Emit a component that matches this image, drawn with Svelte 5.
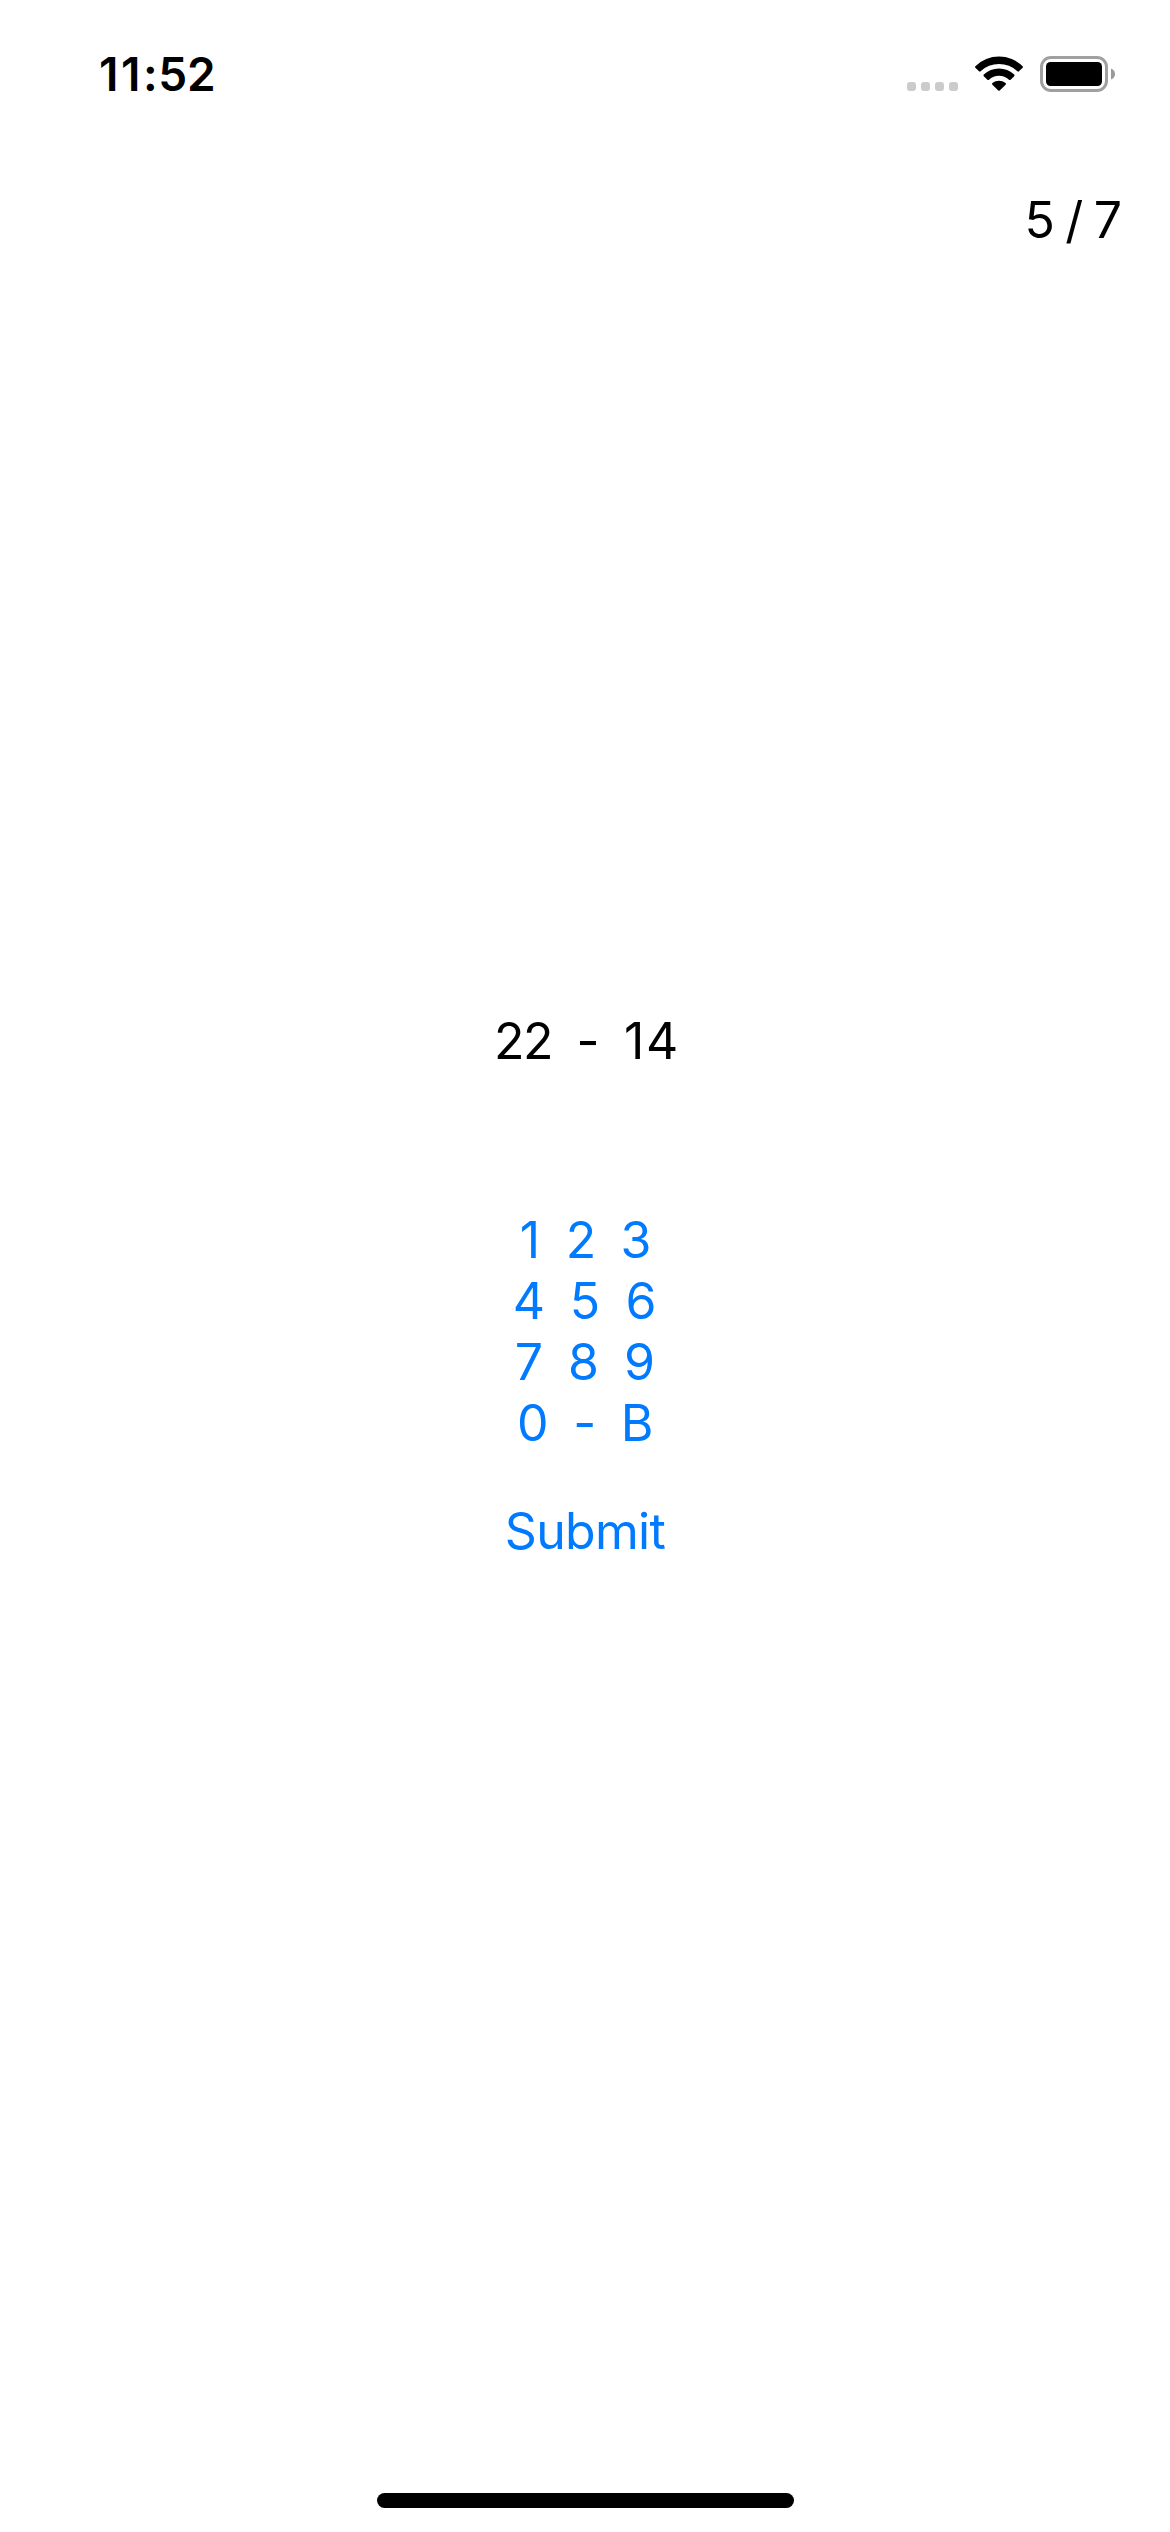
<script>
  const current = 5;
  const total = 7;
  const problem = { left: 22, op: '-', right: 14 };

  const rows = [
    [{ t: '1', w: 24 }, { t: '2', w: 30 }, { t: '3', w: 32 }],
    [{ t: '4', w: 32 }, { t: '5', w: 32 }, { t: '6', w: 32 }],
    [{ t: '7', w: 29 }, { t: '8', w: 32 }, { t: '9', w: 32 }],
    [{ t: '0', w: 32.5 }, { t: '-', w: 23.5 }, { t: 'B', w: 33 }]
  ];
</script>

<main class="screen">
  <header class="status">
    <time class="clock"><span class="hours">11</span><span class="colon">:</span><span>52</span></time>
    <svg class="indicators" width="210" height="42" viewBox="0 0 210 42" aria-hidden="true">
      <!-- cellular dots -->
      <g fill="#cbcbcb">
        <rect x="2" y="30" width="9" height="9" rx="3" />
        <rect x="16" y="30" width="9" height="9" rx="3" />
        <rect x="30" y="30" width="9" height="9" rx="3" />
        <rect x="44" y="30" width="9" height="9" rx="3" />
      </g>
      <!-- wifi -->
      <g transform="translate(94 39)">
        <path d="M-23.6 -24.8 A33.8 33.8 0 0 1 23.6 -24.8 Q24.4 -24 23.6 -23.2 L20 -19.7 Q19.2 -19 18.4 -19.7 A26.6 26.6 0 0 0 -18.4 -19.7 Q-19.2 -19 -20 -19.7 L-23.6 -23.2 Q-24.4 -24 -23.6 -24.8 Z" />
        <path d="M-15.2 -16.4 A21.9 21.9 0 0 1 15.2 -16.4 Q16 -15.6 15.2 -14.8 L11.6 -11.3 Q10.8 -10.6 10 -11.3 A14.7 14.7 0 0 0 -10 -11.3 Q-10.8 -10.6 -11.6 -11.3 L-15.2 -14.8 Q-16 -15.6 -15.2 -16.4 Z" />
        <path d="M-6.6 -7.9 A10.1 10.1 0 0 1 6.6 -7.9 Q7.4 -7.1 6.6 -6.3 L0.7 -0.5 Q0 0.1 -0.7 -0.5 L-6.6 -6.3 Q-7.4 -7.1 -6.6 -7.9 Z" />
      </g>
      <!-- battery -->
      <rect x="136.5" y="5.5" width="65" height="33" rx="9.5" fill="none" stroke="#a0a0a0" stroke-width="3" />
      <rect x="141" y="10" width="56" height="24" rx="4.5" />
      <path d="M206 16.5 Q210 18 210 22 Q210 26 206 27.5 Z" fill="#9a9a9a" />
    </svg>
  </header>

  <p class="progress">{current} / {total}</p>

  <section class="quiz">
    <div class="problem">
      <span class="left">{problem.left}</span>
      <span>{problem.op}</span>
      <span class="right">{problem.right}</span>
    </div>
    <div class="pad">
      {#each rows as row}
        <div class="row">
          {#each row as key}
            <button style="width: {key.w}px">{key.t}</button>
          {/each}
        </div>
      {/each}
    </div>
    <button class="submit">Submit</button>
  </section>

  <div class="home"></div>
</main>

<style>
  :global(body) {
    background: #fff;
  }
  .screen {
    display: flex;
    flex-direction: column;
    width: 1170px;
    height: 2532px;
    box-sizing: border-box;
    padding-bottom: 24px;
    color: #000;
    font: 400 50px/61px Inter, "Liberation Sans", sans-serif;
  }
  .status {
    display: flex;
    justify-content: space-between;
    align-items: flex-start;
    height: 190px;
    box-sizing: border-box;
    padding: 46px 53px 0 99px;
  }
  .clock {
    display: block;
    font-size: 46px;
    font-weight: 600;
    line-height: 56px;
  }
  .hours {
    letter-spacing: 2.5px;
  }
  .colon {
    letter-spacing: 0.6px;
  }
  .indicators {
    display: block;
    margin-top: 6px;
    padding-right: 2px;
  }
  .progress {
    margin: 0;
    padding-right: 48px;
    text-align: right;
    word-spacing: -3.7px;
  }
  .quiz {
    display: flex;
    flex-direction: column;
    align-items: center;
    padding-top: 760px;
  }
  .problem {
    display: flex;
    gap: 24.5px;
  }
  .left {
    width: 58px;
    letter-spacing: -1.5px;
  }
  .right {
    width: 52px;
    letter-spacing: 1.6px;
  }
  .pad {
    margin-top: 138px;
  }
  .row {
    display: flex;
    justify-content: center;
    gap: 24px;
  }
  button {
    display: flex;
    justify-content: center;
    padding: 0;
    border: 0;
    background: none;
    color: #007aff;
    font: inherit;
  }
  .submit {
    margin-top: 47px;
    letter-spacing: -0.7px;
  }
  .home {
    width: 417px;
    height: 15px;
    margin: auto auto 0 377px;
    border-radius: 8px;
    background: #000;
  }
</style>
